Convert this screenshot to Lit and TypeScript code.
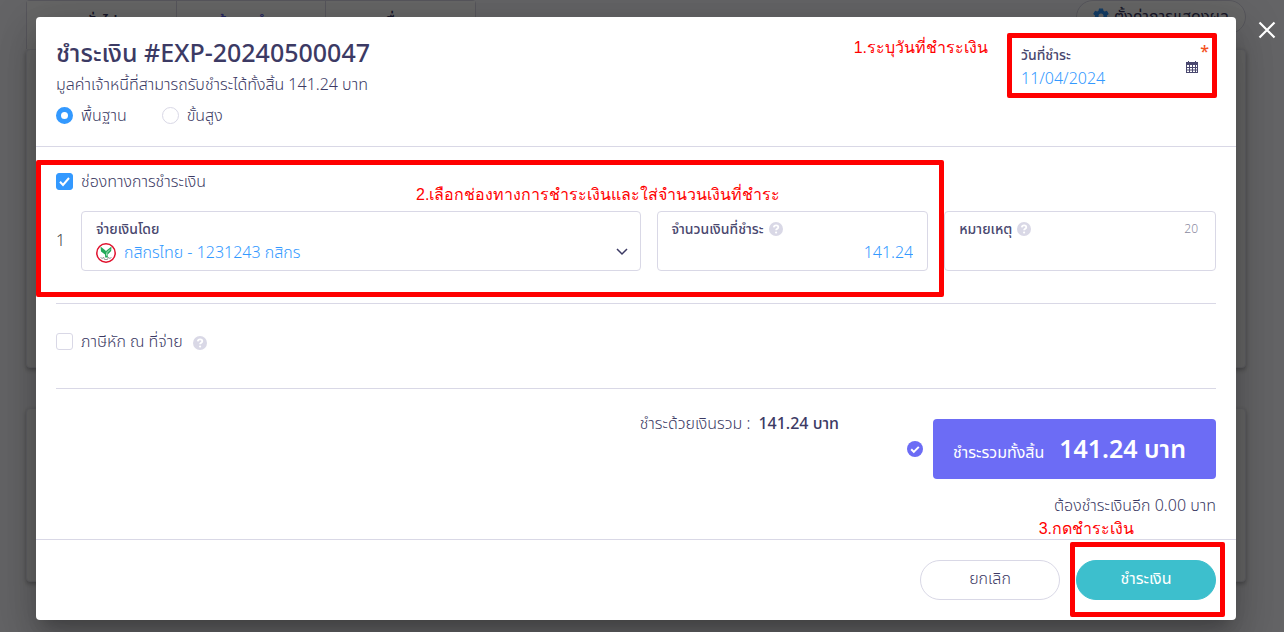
import { LitElement, html, css, svg } from "lit";
import { customElement, property, state } from "lit/decorators.js";
import { classMap } from "lit/directives/class-map.js";

const font = css`"Noto Sans", "Noto Sans Thai", "Open Sans", sans-serif`;

@customElement("help-dot")
export class HelpDot extends LitElement {
  static styles = css`
    :host { display: inline-flex; }
    .dot { display: block; width: 14px; height: 14px; }
  `;
  render() {
    return html`<svg class="dot" viewBox="0 0 14 14" aria-hidden="true">
      <circle cx="7" cy="7" r="7" fill="#d9d8e6" />
      <path d="M4.8 5.4C4.9 4 5.9 3.3 7.1 3.3c1.2 0 2.2.7 2.2 1.900 0 1.500-2.200 1.500-2.200 3" fill="none" stroke="#fff" stroke-width="1.800" />
      <circle cx="7.1" cy="10.5" r="1.1" fill="#fff" />
    </svg>`;
  }
}

@customElement("field-box")
export class FieldBox extends LitElement {
  @property() label = "";
  @property() counter = "";
  @property({ type: Boolean }) help = false;

  static styles = css`
    :host { display: block; min-width: 0; }
    .box {
      box-sizing: border-box;
      height: 60px;
      border: 1px solid #d9d8e6;
      border-radius: 4px;
      padding: 7px 14px 0;
      background: #fff;
    }
    .top {
      display: flex;
      align-items: center;
      gap: 5px;
      height: 20px;
      font: 500 14px/20px ${font};
      color: #4a486f;
    }
    .counter { margin-left: auto; padding-right: 3px; font-weight: 300; font-size: 12px; color: #8a89a0; }
  `;
  render() {
    return html`<div class="box">
      <div class="top">
        <span>${this.label}</span>
        ${this.help ? html`<help-dot></help-dot>` : ""}
        ${this.counter ? html`<span class="counter">${this.counter}</span>` : ""}
      </div>
      <slot></slot>
    </div>`;
  }
}

@customElement("app-root")
export class AppRoot extends LitElement {
  @state() private mode = "basic";
  @state() private tabs = ["ทั่วไป", "ข้อมูลชำระ", "อื่นๆ"];

  static styles = css`
    :host {
      display: block;
      position: relative;
      min-height: 100vh;
      overflow: hidden;
      background: #fbfbff;
      font: 300 16px/24px ${font};
      color: #3c3a64;
    }
    * { box-sizing: border-box; }
    button, input, select { font: inherit; color: inherit; margin: 0; }

    .page { padding: 0 38px 0 26px; }
    .page-top { display: flex; justify-content: space-between; height: 49px; }
    .tabs { display: flex; width: 450px; border: 1px solid #d9d8e6; border-bottom: 0; border-radius: 4px 4px 0 0; background: #fff; }
    .tab { flex: 1; border: 0; border-right: 1px solid #d9d8e6; background: #fff; padding: 0 0 8px; font-weight: 500; }
    .tab:last-child { border-right: 0; }
    .tab.active { color: #5b5bf0; }
    .settings { display: flex; align-items: center; justify-content: center; gap: 5px; width: 170px; height: 34px; border: 1px solid #d9d8e6; border-radius: 17px; background: #fff; padding: 0 0 3px; font-weight: 400; }
    .card { border: 1px solid #ececf4; border-radius: 4px; background: #fff; box-shadow: 0 2px 5px #0000004d; }
    .card-a { height: 319px; }
    .card-b { height: 174px; margin-top: 40px; }

    .overlay {
      position: absolute;
      inset: 0;
      display: flex;
      align-items: flex-start;
      padding: 17px 0 12px 36px;
      background: #0009;
    }
    .close { flex: none; width: 48px; padding: 4px 8px 0 22px; border: 0; background: none; }
    .close svg { display: block; width: 18px; height: 18px; }
    .dialog {
      flex: 1;
      min-width: 0;
      border-radius: 4px;
      background: #fff;
      box-shadow: 0 11px 15px -7px #0003, 0 24px 38px 3px #00000024, 0 9px 46px 8px #0000001f;
    }

    .head { display: flex; justify-content: space-between; height: 130px; padding: 19px 20px 0; border-bottom: 1px solid #d9d8e6; }
    .title { margin: 0; font-size: 25px; line-height: 32px; font-weight: 500; }
    .sub { margin: 4px 0 7px; }
    .modes { display: flex; gap: 35px; }
    .choice { display: flex; align-items: center; gap: 8px; }
    .choice input { appearance: none; flex: none; width: 17px; height: 17px; border: 1px solid #d9d8e6; background: #fff; }
    .choice input[type="radio"] { border-radius: 50%; }
    .choice input[type="radio"]:checked { border: 5px solid #3399ff; }
    .choice input[type="checkbox"] { border-radius: 3px; }
    .tick { display: inline-grid; }
    .tick > * { grid-area: 1 / 1; }
    .tick svg { width: 17px; height: 17px; pointer-events: none; }
    .tick input:checked { background: #3399ff; border-color: #3399ff; }

    .date { position: relative; display: flex; align-items: center; width: 208px; height: 62px; padding: 0 17px 0 13px; }
    .date-main { flex: 1; min-width: 0; }
    .date label { display: block; font-weight: 500; font-size: 14px; line-height: 22px; color: #4a486f; }
    .date input { display: block; width: 100%; height: 24px; border: 0; padding: 0; background: none; color: #3399ff; }
    .date svg { flex: none; width: 14px; height: 14px; }
    .star { position: absolute; right: 7px; top: 3px; color: #f4511e; font-weight: 500; }

    .body { padding: 0 20px; }
    .section { position: relative; border-bottom: 1px solid #d9d8e6; }
    .pay { height: 157px; padding-top: 22px; }
    .row { display: flex; align-items: center; margin-top: 18px; }
    .num { flex: none; width: 25px; padding-bottom: 3px; color: #444; }
    .fields { flex: 1; display: grid; grid-template-columns: repeat(4, 1fr); gap: 16px; }
    .wide { grid-column: span 2; }
    .value { display: flex; align-items: center; gap: 8px; height: 28px; color: #3399ff; }
    .value .bank { flex: none; width: 20px; height: 20px; }
    .value .arrow { flex: none; width: 12px; height: 12px; margin-right: -2px; }
    .value select, .value input { flex: 1; min-width: 0; width: 100%; height: 26px; border: 0; padding: 0 0 2px; background: none; appearance: none; outline: 0; }
    .amount { text-align: right; }
    .tax { height: 85px; padding-top: 25px; }
    .tax .choice { width: max-content; }
    .tax help-dot { margin-left: 2px; padding-top: 3px; }

    .totals { display: flex; justify-content: flex-end; align-items: flex-start; padding-top: 30px; }
    .sum { display: flex; gap: 8px; margin-top: -8px; padding: 0 68px 0 0; }
    .sum b { font-weight: 500; }
    .grand { display: flex; align-items: center; gap: 10px; }
    .grand svg { width: 16px; height: 16px; }
    .badge { display: flex; align-items: baseline; justify-content: space-between; width: 283px; height: 60px; padding: 11px 30px 0 20px; border-radius: 4px; background: #6c6cf5; color: #fff; font-weight: 400; }
    .badge b { font-size: 25px; line-height: 36px; font-weight: 600; }
    .left { margin: 14px 0 0; text-align: right; height: 46px; }

    .foot { position: relative; display: flex; justify-content: flex-end; gap: 16px; padding: 20px; border-top: 1px solid #d9d8e6; }
    .btn { width: 140px; height: 40px; border: 1px solid #d9d8e6; border-radius: 20px; background: #fff; padding: 0 0 4px; }
    .btn.primary { border-color: #3dbfcd; background: #3dbfcd; color: #fff; font-weight: 400; }

    .mark { position: absolute; border: 5px solid #f00; border-radius: 2px; pointer-events: none; }
    .mark-date { inset: -3px -1px 0; }
    .mark-pay { left: -20px; right: 272px; top: 13px; bottom: 6px; }
    .mark-go { right: 11px; top: 2px; width: 155px; bottom: 3px; }
    .note { position: absolute; font: 400 16px/24px "Liberation Sans", sans-serif; color: #f00; white-space: nowrap; }
    .note-date { right: 228px; top: 0; }
    .note-pay { left: 360px; top: 36px; }
    .note-go { right: 102px; top: -23px; }
  `;

  private tick(id: string, checked: boolean) {
    return html`<span class="tick">
      <input id=${id} type="checkbox" .checked=${checked} />
      <svg viewBox="0 0 17 17">${svg`<path d="M4 8.800 7 12l6-7" fill="none" stroke="#fff" stroke-width="2" />`}</svg>
    </span>`;
  }

  render() {
    return html`
      <div class="page">
        <div class="page-top">
          <div class="tabs">
            ${this.tabs.map((t, i) => html`<button class=${classMap({ tab: true, active: i === 1 })}>${t}</button>`)}
          </div>
          <button class="settings">
            <svg width="16" height="16" viewBox="0 0 16 16" aria-hidden="true">
              <path fill="#3399ff" fill-rule="evenodd" d="M6 .5h4l.5 2.300 1.200.7 2.200-.8 1.900 3.300L14 7.500v1l1.800 1.500-1.900 3.300-2.200-.8-1.200.7-.5 2.300H6l-.5-2.300-1.200-.7-2.200.8L.2 10 2 8.500v-1L.2 6l1.900-3.300 2.200.8 1.200-.7zM8 5.500a2.500 2.500 0 1 0 0 5 2.500 2.500 0 0 0 0-5z" />
            </svg>
            ตั้งค่าการแสดงผล
          </button>
        </div>
        <div class="card card-a"></div>
        <div class="card card-b"></div>
      </div>

      <div class="overlay">
        <div class="dialog" role="dialog" aria-labelledby="title">
          <header class="head">
            <div>
              <h1 class="title" id="title">ชำระเงิน #EXP-20240500047</h1>
              <p class="sub">มูลค่าเจ้าหนี้ที่สามารถรับชำระได้ทั้งสิ้น 141.24 บาท</p>
              <div class="modes">
                ${[["basic", "พื้นฐาน"], ["advanced", "ขั้นสูง"]].map(
                  ([value, text]) => html`<label class="choice">
                    <input type="radio" name="mode" value=${value} .checked=${this.mode === value}
                      @change=${() => (this.mode = value)} />${text}
                  </label>`
                )}
              </div>
            </div>
            <div class="date">
              <div class="date-main">
                <label for="date">วันที่ชำระ</label>
                <input id="date" type="text" value="11/04/2024" />
              </div>
              <svg viewBox="0 0 14 14" aria-hidden="true">
                <path fill="#4a486f" fill-rule="evenodd" d="M1 2h2V1h1v1h6V1h1v1h2v11H1zM2 5v2h2V5zm3 0v2h2V5zm3 0v2h2V5zm3 0v2h1V5zM2 8v1.500h2V8zm3 0v1.500h2V8zm3 0v1.500h2V8zm3 0v1.500h1V8zM2 10.500V12h2v-1.500zm3 0V12h2v-1.500zm3 0V12h2v-1.500zm3 0V12h1v-1.500z" />
              </svg>
              <span class="star">*</span>
              <span class="mark mark-date"></span>
              <span class="note note-date">1.ระบุวันที่ชำระเงิน</span>
            </div>
          </header>

          <div class="body">
            <section class="section pay">
              <label class="choice">${this.tick("channel", true)}ช่องทางการชำระเงิน</label>
              <div class="row">
                <span class="num">1</span>
                <div class="fields">
                  <field-box class="wide" label="จ่ายเงินโดย">
                    <div class="value">
                      <svg class="bank" viewBox="0 0 20 20" aria-hidden="true">
                        <circle cx="10" cy="10" r="9.200" fill="#fff" stroke="#e0102c" stroke-width="1.500" />
                        <path fill="#22a958" d="M4.500 3.500 9.500 7.500 10 8.500 10.500 7.500 15.500 3.500 15.200 8 11.500 11.800 12 14.500H9.200L9 11.500 5 8.500z" />
                        <path d="m10.500 12.500.5-3 3-3" fill="none" stroke="#fff" stroke-width=".7" />
                        <path d="m4.500 14.500 2 1 1-1.500 1 2.500h3l1-2.500 1 1.500 2-1" fill="none" stroke="#999" stroke-width="1" />
                      </svg>
                      <select aria-label="จ่ายเงินโดย"><option>กสิกรไทย - 1231243 กสิกร</option></select>
                      <svg class="arrow" viewBox="0 0 12 12" aria-hidden="true"><path d="m1 2 5 5 5-5" fill="none" stroke="#3c3a64" stroke-width="1.500" /></svg>
                    </div>
                  </field-box>
                  <field-box label="จำนวนเงินที่ชำระ" help>
                    <div class="value"><input class="amount" aria-label="จำนวนเงินที่ชำระ" value="141.24" /></div>
                  </field-box>
                  <field-box label="หมายเหตุ" help counter="20">
                    <div class="value"><input aria-label="หมายเหตุ" maxlength="20" /></div>
                  </field-box>
                </div>
              </div>
              <span class="mark mark-pay"></span>
              <span class="note note-pay">2.เลือกช่องทางการชำระเงินและใส่จำนวนเงินที่ชำระ</span>
            </section>

            <section class="section tax">
              <label class="choice">${this.tick("withholding", false)}ภาษีหัก ณ ที่จ่าย <help-dot></help-dot></label>
            </section>

            <div class="totals">
              <div class="sum"><span>ชำระด้วยเงินรวม :</span><b>141.24 บาท</b></div>
              <div class="grand">
                <svg viewBox="0 0 16 16" aria-hidden="true"><circle cx="8" cy="8" r="8" fill="#6c6cf5" /><path d="m4.200 8.300 2.600 2.600 5-5" fill="none" stroke="#fff" stroke-width="2" /></svg>
                <div class="badge"><span>ชำระรวมทั้งสิ้น</span><b>141.24 บาท</b></div>
              </div>
            </div>
            <p class="left">ต้องชำระเงินอีก 0.00 บาท</p>
          </div>

          <footer class="foot">
            <button class="btn">ยกเลิก</button>
            <button class="btn primary">ชำระเงิน</button>
            <span class="mark mark-go"></span>
            <span class="note note-go">3.กดชำระเงิน</span>
          </footer>
        </div>
        <button class="close" aria-label="ปิด">
          <svg viewBox="0 0 18 18"><path d="m1.500 1.500 15 15m0-15-15 15" stroke="#fff" stroke-width="2.200" /></svg>
        </button>
      </div>
    `;
  }
}
